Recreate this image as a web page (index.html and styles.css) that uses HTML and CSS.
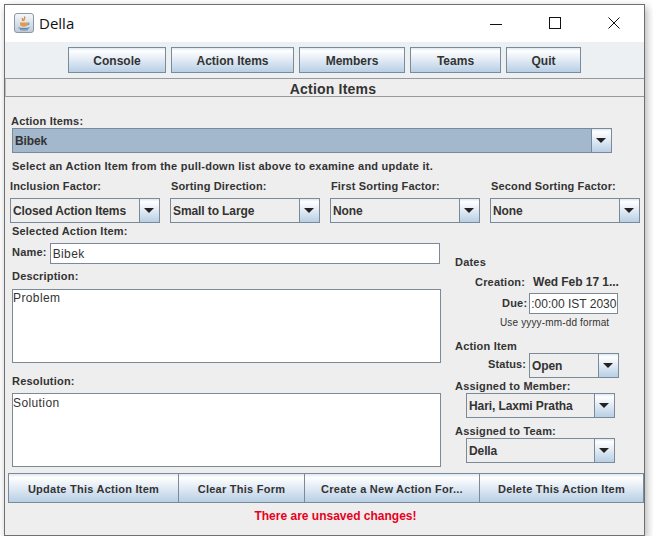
FILE: index.html
```html
<!DOCTYPE html>
<html lang="en">
<head>
    <meta charset="UTF-8">
    <meta name="viewport" content="width=device-width, initial-scale=1.0">
    <title>Della</title>
    <link rel="stylesheet" href="styles.css">
</head>
<body>

    <div class="window">
        <div class="titlebar">
            <svg class="app-icon" width="20" height="20" viewBox="0 0 20 20">
                <defs>
                    <linearGradient id="tile" x1="0" y1="0" x2="0" y2="1">
                        <stop offset="0" stop-color="#f6f8fa"/>
                        <stop offset="1" stop-color="#bccbdb"/>
                    </linearGradient>
                </defs>
                <rect x="0.5" y="0.5" width="19" height="19" rx="2.5" fill="url(#tile)" stroke="#8a97a5"/>
                <path d="M10.5 3.5c1.5 1.6-1.6 2.6-.4 4.4M8.5 5c-.8 1 .4 1.6.2 2.8" fill="none" stroke="#d9802e" stroke-width="1.2"/>
                <path d="M6 9.5h7.5v1.2c0 2-1.4 3-3.7 3s-3.8-1-3.8-3z" fill="#e39a4b"/>
                <path d="M13.5 10h1.4v1.6h-1.6" fill="none" stroke="#6f88a8"/>
                <path d="M4.5 14.8c2.5 1 8.500 1 11 0M6 16.600c2 .5 6 .5 8 0" fill="none" stroke="#5f7fa6" stroke-width="1"/>
            </svg>
            <span class="app-title">Della</span>
            <div class="win-controls">
                <svg class="win-btn" width="14" height="14" viewBox="0 0 14 14"><path d="M1 8.500h12" stroke="#111" stroke-width="1"/></svg>
                <svg class="win-btn" width="14" height="14" viewBox="0 0 14 14"><rect x="1.500" y="1.500" width="11" height="11" fill="none" stroke="#111"/></svg>
                <svg class="win-btn" width="14" height="14" viewBox="0 0 14 14"><path d="M1.500 1.500l11 11M12.500 1.500l-11 11" stroke="#111" stroke-width="1"/></svg>
            </div>
        </div>

        <div class="toolbar">
            <button class="btn btn-console">Console</button>
            <button class="btn btn-items">Action Items</button>
            <button class="btn btn-members">Members</button>
            <button class="btn btn-teams">Teams</button>
            <button class="btn btn-quit">Quit</button>
        </div>

        <h1 class="page-title">Action Items</h1>

        <div class="content">
            <div class="lbl lbl-items">Action Items:</div>
            <div class="combo combo-main selected">
                <span class="combo-text">Bibek</span>
                <span class="combo-arrow"></span>
            </div>
            <div class="lbl hint">Select an Action Item from the pull-down list above to examine and update it.</div>

            <div class="filters">
                <div>
                    <div class="lbl filter-lbl">Inclusion Factor:</div>
                    <div class="combo"><span class="combo-text">Closed Action Items</span><span class="combo-arrow"></span></div>
                </div>
                <div>
                    <div class="lbl filter-lbl">Sorting Direction:</div>
                    <div class="combo"><span class="combo-text">Small to Large</span><span class="combo-arrow"></span></div>
                </div>
                <div>
                    <div class="lbl filter-lbl">First Sorting Factor:</div>
                    <div class="combo"><span class="combo-text">None</span><span class="combo-arrow"></span></div>
                </div>
                <div>
                    <div class="lbl filter-lbl">Second Sorting Factor:</div>
                    <div class="combo"><span class="combo-text">None</span><span class="combo-arrow"></span></div>
                </div>
            </div>

            <div class="details">
                <div class="left-col">
                    <div class="lbl selected-lbl">Selected Action Item:</div>
                    <div class="name-row">
                        <span class="lbl">Name:</span>
                        <input class="field name-field" type="text" value="Bibek">
                    </div>
                    <div class="lbl desc-lbl">Description:</div>
                    <textarea class="area area-desc">Problem</textarea>
                    <div class="lbl res-lbl">Resolution:</div>
                    <textarea class="area area-res">Solution</textarea>
                </div>

                <div class="right-col">
                    <div class="lbl dates-lbl">Dates</div>
                    <div class="creation-row">
                        <span class="lbl">Creation:</span>
                        <span class="lbl creation-val">Wed Feb 17 1...</span>
                    </div>
                    <div class="due-row">
                        <span class="lbl">Due:</span>
                        <input class="field due-field" type="text" value=":00:00 IST 2030">
                    </div>
                    <div class="format-note">Use yyyy-mm-dd format</div>
                    <div class="lbl item-lbl">Action Item</div>
                    <div class="status-row">
                        <span class="lbl">Status:</span>
                        <div class="combo combo-status"><span class="combo-text">Open</span><span class="combo-arrow"></span></div>
                    </div>
                    <div class="lbl member-lbl">Assigned to Member:</div>
                    <div class="combo combo-assign"><span class="combo-text">Hari, Laxmi Pratha</span><span class="combo-arrow"></span></div>
                    <div class="lbl team-lbl">Assigned to Team:</div>
                    <div class="combo combo-assign"><span class="combo-text">Della</span><span class="combo-arrow"></span></div>
                </div>
            </div>

            <div class="actions">
                <button class="btn act-update">Update This Action Item</button>
                <button class="btn act-clear">Clear This Form</button>
                <button class="btn act-create">Create a New Action For...</button>
                <button class="btn act-delete">Delete This Action Item</button>
            </div>

            <div class="unsaved">There are unsaved changes!</div>
        </div>
    </div>

</body>
</html>
```

FILE: styles.css
```css
body {
    font-family: "Liberation Sans", Arial, sans-serif;
    font-size: 12px;
    margin: 0;
    padding: 0;
    background-color: #fff;
    color: #333;
}
.window {
    box-sizing: border-box;
    width: 641px;
    height: 532px;
    margin: 4px 0 0 4px;
    border: 1px solid #6f6f6f;
    background-color: #eee;
    box-shadow: 2px 3px 8px rgba(0, 0, 0, 0.3);
}
.titlebar {
    display: flex;
    align-items: center;
    box-sizing: border-box;
    height: 37px;
    background-color: #fff;
    padding: 0 0 1px 9px;
}
.app-icon {
    flex: none;
}
.app-title {
    font-family: "Open Sans", sans-serif;
    font-size: 15px;
    color: #111;
    margin-left: 5px;
}
.win-controls {
    display: flex;
    gap: 45px;
    margin-left: auto;
    margin-right: 23px;
}
.toolbar {
    display: flex;
    gap: 5px;
    height: 36px;
    box-sizing: border-box;
    padding: 5px 0 0 63px;
    background-color: #edf0f3;
}
.btn {
    box-sizing: border-box;
    height: 26px;
    padding: 1px 0 0;
    border: 1px solid #7a8a99;
    background: linear-gradient(#dde8f3, #fff 12%, #b8cfe5);
    font-family: "Liberation Sans", Arial, sans-serif;
    font-size: 12px;
    font-weight: bold;
    color: #333;
    cursor: pointer;
}
.btn-console { width: 98px; }
.btn-items { width: 123px; }
.btn-members { width: 106px; }
.btn-teams { width: 91px; }
.btn-quit { width: 75px; }
.page-title {
    box-sizing: border-box;
    height: 19px;
    margin: 0;
    padding-left: 16px;
    border-top: 1px solid #999;
    border-bottom: 1px solid #999;
    border-left: 1px solid #bbb;
    font-size: 14px;
    letter-spacing: 0.2px;
    line-height: 20px;
    text-align: center;
    color: #333;
}
.content {
    padding: 0;
}
.lbl {
    font-weight: bold;
    font-size: 11px;
    letter-spacing: 0.2px;
    line-height: 13px;
    white-space: nowrap;
}
.lbl-items {
    margin: 18px 0 0 6px;
}
.combo {
    display: flex;
    box-sizing: border-box;
    height: 25px;
    border: 1px solid #7a8a99;
    background-color: #eee;
    font-weight: bold;
    font-size: 12px;
    letter-spacing: -0.1px;
    line-height: 24px;
}
.combo-text {
    flex: 1;
    padding-left: 2px;
    overflow: hidden;
    white-space: nowrap;
}
.combo-arrow {
    position: relative;
    flex: none;
    width: 19px;
    border-left: 1px solid #7a8a99;
    background: linear-gradient(#dde8f3, #fff 12%, #b8cfe5);
}
/* little black triangle on the combo button */
.combo-arrow::after {
    content: "";
    position: absolute;
    left: 4px;
    top: 9px;
    border-left: 5px solid transparent;
    border-right: 5px solid transparent;
    border-top: 5px solid #222;
}
.combo-main {
    width: 600px;
    margin: 0 0 0 7px;
}
.selected .combo-text {
    background-color: #a3b8cc;
    padding-left: 2px;
}
.hint {
    margin: 7px 0 0 7px;
    letter-spacing: 0.25px;
}
.filters {
    display: grid;
    grid-template-columns: repeat(4, 150px);
    gap: 10px;
    margin: 7px 0 0 5px;
}
.filter-lbl {
    margin: 0 0 5px 0;
    letter-spacing: 0.15px;
}
.filters > div + div .filter-lbl {
    padding-left: 1px;
}
.details {
    display: flex;
}
.left-col {
    width: 450px;
    padding-left: 7px;
    box-sizing: border-box;
}
.selected-lbl {
    margin-top: 2px;
}
.name-row {
    display: flex;
    align-items: flex-start;
    gap: 3px;
    margin-top: 5px;
}
.name-row .lbl {
    margin-top: 3px;
}
.field {
    box-sizing: border-box;
    height: 21px;
    padding: 1px 2px 0;
    border: 1px solid #7a8a99;
    background-color: #fff;
    font-family: "Liberation Sans", Arial, sans-serif;
    font-size: 12px;
    letter-spacing: 0.4px;
    color: #333;
}
.name-field {
    width: 390px;
}
.desc-lbl {
    margin-top: 6px;
}
.area {
    display: block;
    box-sizing: border-box;
    width: 429px;
    padding: 1px 0;
    border: 1px solid #7a8a99;
    background-color: #fff;
    font-family: "Liberation Sans", Arial, sans-serif;
    font-size: 12px;
    letter-spacing: 0.4px;
    color: #333;
    resize: none;
}
.area-desc {
    height: 74px;
    margin-top: 6px;
}
.res-lbl {
    margin-top: 12px;
}
.area-res {
    height: 74px;
    margin-top: 5px;
    padding-top: 2px;
}
.right-col {
    flex: 1;
}
.dates-lbl {
    margin-top: 33px;
}
.creation-row {
    display: flex;
    margin: 7px 0 0 20px;
}
.creation-val {
    margin-left: 8px;
    font-size: 12px;
    letter-spacing: -0.05px;
}
.due-row {
    display: flex;
    align-items: center;
    gap: 2px;
    margin: 4px 0 0 47px;
}
.due-field {
    width: 89px;
    padding: 1px 0 0 1px;
    letter-spacing: 0;
}
.format-note {
    margin: 3px 0 0 45px;
    font-size: 10px;
    letter-spacing: 0.15px;
    line-height: 12px;
}
.item-lbl {
    margin-top: 11px;
}
.status-row {
    display: flex;
    gap: 3px;
    margin: 0 0 0 33px;
}
.status-row .lbl {
    margin-top: 5px;
    letter-spacing: 0.1px;
}
.combo-status {
    width: 90px;
}
.member-lbl {
    margin-top: 2px;
}
.combo-assign {
    width: 149px;
    margin: 0 0 0 11px;
}
.team-lbl {
    margin-top: 7px;
}
.actions {
    display: flex;
    margin: 6px 0 0 3px;
}
.actions .btn {
    height: 30px;
    margin-right: -1px;
    padding-top: 2px;
    font-size: 11px;
    letter-spacing: 0.25px;
}
.act-update { width: 171px; }
.act-clear { width: 127px; }
.act-create { width: 176px; }
.act-delete { width: 165px; }
.unsaved {
    margin-top: 6px;
    padding-left: 22px;
    font-weight: bold;
    color: #e8001c;
    text-align: center;
    line-height: 14px;
}
```
